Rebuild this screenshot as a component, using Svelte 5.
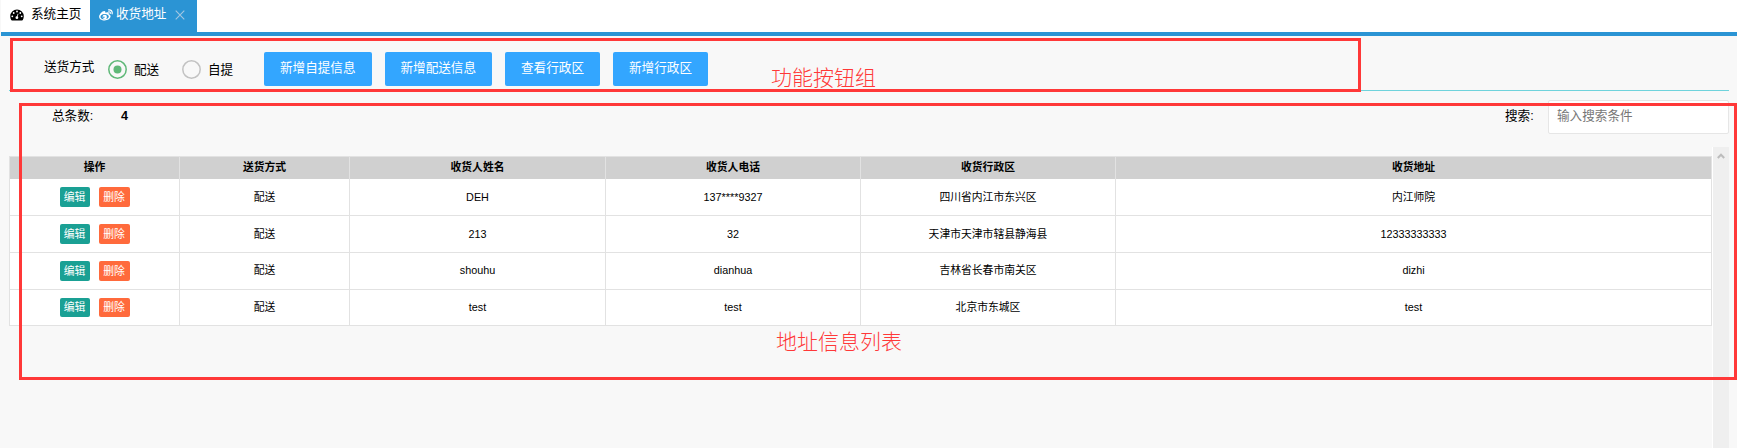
<script>
  const actions = ['新增自提信息', '新增配送信息', '查看行政区', '新增行政区'];
  const heads = ['操作', '送货方式', '收货人姓名', '收货人电话', '收货行政区', '收货地址'];
  const rows = [
    ['配送', 'DEH', '137****9327', '四川省内江市东兴区', '内江师院'],
    ['配送', '213', '32', '天津市天津市辖县静海县', '12333333333'],
    ['配送', 'shouhu', 'dianhua', '吉林省长春市南关区', 'dizhi'],
    ['配送', 'test', 'test', '北京市东城区', 'test']
  ];
</script>

<div class="page">
  <nav class="tabs">
    <div class="tab home">
      <svg width="14" height="12" viewBox="0 0 14 12">
        <path fill="#000" d="M7 .5a6.8 6.8 0 0 0-6.8 6.8c0 1.4.4 2.600 1 3.700.2.3.4.4.8.4h10c.4 0 .6-.1.8-.4.600-1.100 1-2.300 1-3.700A6.800 6.800 0 0 0 7 .5z" />
        <g fill="#fff"><circle cx="2.300" cy="7.300" r=".9" /><circle cx="3.700" cy="4" r=".9" /><circle cx="7" cy="2.500" r=".9" /><circle cx="10.300" cy="4" r=".9" /><circle cx="11.700" cy="7.300" r=".9" /><circle cx="6.900" cy="8.700" r="1.400" /></g>
        <path d="M7 8.500L8 4.800" stroke="#fff" stroke-width=".8" />
      </svg>
      <span>系统主页</span>
    </div>
    <div class="tab active">
      <svg width="14" height="12" viewBox="0 0 14 12">
        <path fill="#fff" fill-rule="evenodd" d="M5.800 2.200c.8.300.6 1.200.5 1.600 1.500-.6 3.500-.8 3.500.700 0 .4-.2.700-.1.800 1 .3 1.900.9 1.900 2 0 2.100-2.800 4.200-6 4.200-3 0-5.500-1.500-5.500-3.700C.1 5.500 3.700 1.500 5.800 2.200zM5.400 5.100C3.100 5.300 1.400 6.500 1.500 8c.1 1.500 2 2.500 4.300 2.300S9.900 8.800 9.800 7.400C9.700 5.900 7.700 4.900 5.400 5.100z" />
        <path fill="#fff" fill-rule="evenodd" d="M5.700 5.800a2.200 2.200 0 1 0 .1 4.400 2.200 2.200 0 0 0-.1-4.400zM4.900 7.500a.8.8 0 1 1-.1 1.600.8.8 0 0 1 .1-1.600z" />
        <path fill="none" stroke="#fff" stroke-width="1.200" stroke-linecap="round" d="M9.600.9c2.500-.5 4 1.500 3.500 3.900M9.700 2.800c1.200-.2 1.800.6 1.500 1.700" />
      </svg>
      <span>收货地址</span>
      <svg class="close" width="10" height="10" viewBox="0 0 10 10"><path d="M.7.7l8.600 8.600M9.300.7L.7 9.300" stroke="#a3c7e2" stroke-width="1.100" /></svg>
    </div>
  </nav>

  <section class="toolbar">
    <span class="label">送货方式</span>
    <label class="radio">
      <svg width="19" height="19" viewBox="0 0 19 19"><circle cx="9.500" cy="9.500" r="8.700" fill="none" stroke="#5fb878" stroke-width="1.500" /><circle cx="9.500" cy="9.500" r="4" fill="#5fb878" /></svg>
      <span>配送</span>
    </label>
    <label class="radio second">
      <svg width="19" height="19" viewBox="0 0 19 19"><circle cx="9.500" cy="9.500" r="8.700" fill="none" stroke="#c2c2c2" stroke-width="1.500" /></svg>
      <span>自提</span>
    </label>
    <div class="actions">
      {#each actions as a}<button class:wide={a.length > 5}>{a}</button>{/each}
    </div>
  </section>

  <section class="summary">
    <span class="total">总条数:</span><b>4</b>
    <span class="search">搜索:</span>
    <input placeholder="输入搜索条件" />
  </section>

  <section class="list">
    <div class="grid">
      <div class="row head">
        {#each heads as h}<div class="cell">{h}</div>{/each}
      </div>
      {#each rows as r, i}
        <div class="row" class:raised={i > 1}>
          <div class="cell ops"><button class="edit">编辑</button><button class="del">删除</button></div>
          {#each r as c}<div class="cell">{c}</div>{/each}
        </div>
      {/each}
    </div>
    <div class="scroll">
      <svg width="8" height="6" viewBox="0 0 8 6"><path d="M.8 5L4 1.700 7.200 5" fill="none" stroke="#bcbcbc" stroke-width="2" /></svg>
    </div>
  </section>

  <div class="mark first"></div>
  <div class="mark second-box"></div>
  <span class="note n1">功能按钮组</span>
  <span class="note n2">地址信息列表</span>
</div>

<style>
  :global(body) { background: #f8f8f8; overflow: hidden; }
  .page { position: relative; width: 1737px; height: 448px; overflow: hidden; box-sizing: border-box; background: #f8f8f8; color: #000; font: 12.6px/18px "Liberation Sans", "Noto Sans CJK SC", sans-serif; display: flex; flex-direction: column; }
  .page * { box-sizing: border-box; }
  button, input { font-family: inherit; margin: 0; }
  .tabs { display: flex; flex: none; height: 36px; background: #fff; border-bottom: 4px solid #2b94d4; margin-left: 1px; }
  .tab { display: flex; align-items: center; height: 32px; padding-bottom: 3px; white-space: nowrap; }
  .home { width: 89px; padding-left: 9px; gap: 7px; }
  .home span, .active span { margin-top: -1px; }
  .active { width: 107px; background: #2b94d4; color: #fff; padding-left: 9px; gap: 3px; }
  .close { margin-left: 6px; }
  .toolbar { display: flex; flex: none; height: 55px; margin: 0 8px 0 9px; border-bottom: 1px solid #6fd3dc; padding: 16px 0 0 35px; white-space: nowrap; }
  .label { width: 64px; padding-top: 6px; }
  .radio { display: flex; align-items: center; height: 34px; width: 74px; gap: 7px; }
  .radio span { padding-top: 2px; }
  .second { width: 82px; }
  .actions { display: flex; gap: 13px; }
  .actions button { width: 95px; height: 34px; padding: 0 0 5px; border: 0; border-radius: 2px; background: #33a6ff; color: #fff; font-size: 12.6px; }
  .actions button.wide { width: 107.500px; }
  .summary { display: flex; flex: none; height: 56px; padding: 9px 8px 0 52px; }
  .total { width: 69px; padding-top: 7px; }
  .summary b { padding-top: 7px; }
  .search { margin-left: auto; width: 43px; padding-top: 7px; }
  input { width: 181px; height: 34px; border: 1px solid #e6e6e6; border-radius: 2px; background: #fff; padding: 0 8px 2px; font-size: 12.6px; outline: 0; }
  input::placeholder { color: #777; opacity: 1; }
  .list { display: flex; flex: 1; padding-left: 9px; }
  .grid { width: 1703px; margin-top: 9px; font-size: 10.800px; line-height: 16px; border-left: 1px solid #e2e2e2; border-top: 1px solid #e2e2e2; align-self: flex-start; }
  .row { display: grid; grid-template-columns: 170px 170px 256px 255px 255px 596px; height: 37px; background: #fff; }
  .row:last-child { height: 36px; }
  .cell { display: flex; align-items: center; justify-content: center; border-right: 1px solid #e2e2e2; border-bottom: 1px solid #e2e2e2; }
  .raised .cell:not(.ops) { padding-bottom: 2px; }
  .head { height: 22px; background: #d0d0d0; font-weight: 700; }
  .head .cell { border-bottom: 0; padding-bottom: 2px; }
  .ops { gap: 9px; }
  .ops button { width: 31px; height: 20px; padding: 0 0 1px; border: 0; border-radius: 2px; color: #fff; font-size: 10.800px; line-height: 18px; }
  .row:last-child .ops button { height: 19px; }
  .ops .edit { width: 30px; background: #1aa094; }
  .ops .del { background: #ff6a3c; }
  .scroll { width: 17px; background: #efefef; border-left: 1px solid #fff; display: flex; justify-content: center; padding-top: 6px; }
  .mark { position: absolute; border: 3px solid #ff3838; }
  .first { left: 10px; top: 38px; width: 1351px; height: 54px; }
  .second-box { left: 19px; top: 103px; width: 1718px; height: 277px; }
  .note { position: absolute; color: #ff3838; font: 300 21px/26px "Noto Sans CJK SC", sans-serif; white-space: nowrap; }
  .n1 { left: 771px; top: 63px; }
  .n2 { left: 776px; top: 327px; }
</style>
